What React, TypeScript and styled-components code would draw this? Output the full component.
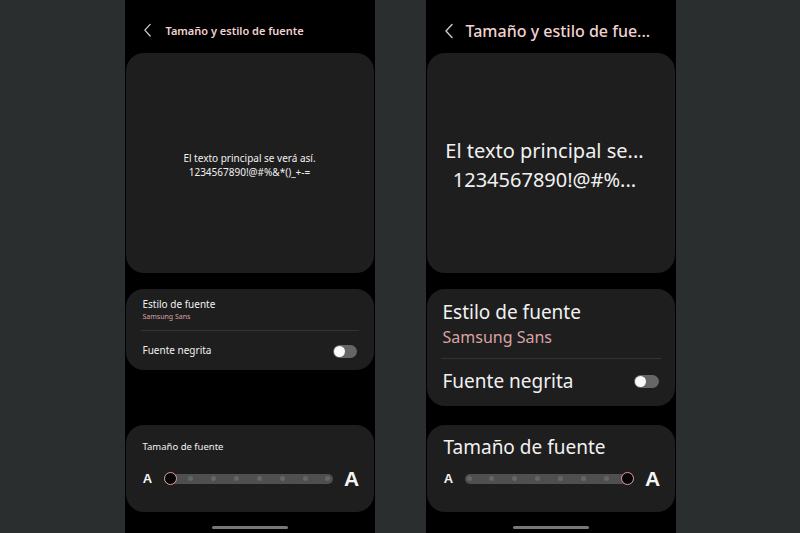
import React, { FC } from "react";
import styled, { createGlobalStyle } from "styled-components";

type Size = "small" | "large";

interface PhoneProps {
    size: Size;
    title: string;
    previewLines: string[];
    sliderValue: number;
}

const S = {
    small: {
        titleSize: 11, titleLeft: 14, chevron: 9,
        previewSize: 10, previewLine: 14,
        labelSize: 10, subSize: 7, card2Pad: "9px 17px 9px 17px",
        dividerGap: "9px -2px 13px", toggleW: 24, toggleH: 13,
        sizeTitle: 9.5, sizeTitleTop: 16, smallA: 13, bigA: 21,
    },
    large: {
        titleSize: 16, titleLeft: 12, chevron: 10,
        previewSize: 20, previewLine: 29,
        labelSize: 19, subSize: 16, card2Pad: "11px 16px 9px 16px",
        dividerGap: "10px -2px", toggleW: 25, toggleH: 13,
        sizeTitle: 19, sizeTitleTop: 10, smallA: 13, bigA: 21,
    },
};

const Phone: FC<PhoneProps> = ({ size, title, previewLines, sliderValue }) => {
    const steps = 8;
    return (
        <PhoneFrame>
            <Header $size={size}>
                <svg width={S[size].chevron} height={S[size].chevron * 1.6} viewBox="0 0 10 16">
                    <path d="M8 1.5 L2 8 L8 14.5" fill="none" stroke="#d8c6c6" strokeWidth="1.4" strokeLinecap="round" strokeLinejoin="round" />
                </svg>
                <HeaderTitle $size={size}>{title}</HeaderTitle>
            </Header>

            <PreviewCard $size={size}>
                {previewLines.map((l) => (
                    <PreviewText key={l} $size={size}>{l}</PreviewText>
                ))}
            </PreviewCard>

            <SettingsCard $size={size}>
                <Row>
                    <Label $size={size}>Estilo de fuente</Label>
                    <SubLabel $size={size}>Samsung Sans</SubLabel>
                </Row>
                <Divider $size={size} />
                <ToggleRow $size={size}>
                    <Label $size={size}>Fuente negrita</Label>
                    <Toggle $size={size}><Knob /></Toggle>
                </ToggleRow>
            </SettingsCard>

            <SizeCard>
                <SizeTitle $size={size}>Tamaño de fuente</SizeTitle>
                <SliderRow>
                    <LetterA $px={S[size].smallA}>A</LetterA>
                    <Track>
                        {Array.from({ length: steps }).map((_, i) => (
                            <Dot key={i} $hidden={i === sliderValue} />
                        ))}
                        <Thumb style={{ left: `calc(${(sliderValue / (steps - 1)) * 100}% - ${sliderValue === 0 ? 0 : 13}px)` }} />
                    </Track>
                    <LetterA $px={S[size].bigA}>A</LetterA>
                </SliderRow>
            </SizeCard>

            <HomeBar />
        </PhoneFrame>
    );
};

const App: FC = () => (
    <>
        <GlobalStyle />
        <Page>
            <Phone
                size="small"
                title="Tamaño y estilo de fuente"
                previewLines={["El texto principal se verá así.", "1234567890!@#%&*()_+-="]}
                sliderValue={0}
            />
            <Phone
                size="large"
                title="Tamaño y estilo de fue..."
                previewLines={["El texto principal se...", "1234567890!@#%..."]}
                sliderValue={7}
            />
        </Page>
    </>
);

export default App;

const GlobalStyle = createGlobalStyle`
    html, body {
        margin: 0;
        padding: 0;
        background: #2a2e2f;
        font-family: "Noto Sans", "Open Sans", sans-serif;
    }
`;

const Page = styled.div`
    width: 800px;
    height: 533px;
    display: flex;
    justify-content: center;
    gap: 51px;
    background: #2a2e2f;
    overflow: hidden;
`;

const PhoneFrame = styled.div`
    width: 250px;
    height: 533px;
    background: #000;
    display: flex;
    flex-direction: column;
    padding: 0 1px;
    box-sizing: border-box;
    color: #f1f1f1;
`;

const Header = styled.div<{ $size: Size }>`
    height: 53px;
    display: flex;
    align-items: center;
    padding-left: 17px;
    padding-top: ${(p) => (p.$size === "small" ? 7 : 9)}px;
    box-sizing: border-box;
`;

const HeaderTitle = styled.span<{ $size: Size }>`
    margin-left: ${(p) => S[p.$size].titleLeft}px;
    font-size: ${(p) => S[p.$size].titleSize}px;
    font-weight: ${(p) => (p.$size === "small" ? 600 : 500)};
    color: #f2d2d2;
    white-space: nowrap;
`;

const Card = styled.div`
    background: #1e1e1e;
    border-radius: 18px;
`;

const PreviewCard = styled(Card)<{ $size: Size }>`
    height: 220px;
    display: flex;
    flex-direction: column;
    align-items: center;
    justify-content: center;
    padding-top: 4px;
    padding-right: ${(p) => (p.$size === "large" ? 12 : 0)}px;
    box-sizing: border-box;
`;

const PreviewText = styled.div<{ $size: Size }>`
    font-size: ${(p) => S[p.$size].previewSize}px;
    line-height: ${(p) => S[p.$size].previewLine}px;
    white-space: nowrap;
`;

const SettingsCard = styled(Card)<{ $size: Size }>`
    margin-top: 16px;
    padding: ${(p) => S[p.$size].card2Pad};
    display: flex;
    flex-direction: column;
`;

const Row = styled.div`
    display: flex;
    flex-direction: column;
`;

const Label = styled.div<{ $size: Size }>`
    font-size: ${(p) => S[p.$size].labelSize}px;
    line-height: ${(p) => S[p.$size].labelSize * 1.35}px;
`;

const SubLabel = styled.div<{ $size: Size }>`
    font-size: ${(p) => S[p.$size].subSize}px;
    line-height: ${(p) => S[p.$size].subSize * 1.4}px;
    color: #d9a3a5;
`;

const Divider = styled.div<{ $size: Size }>`
    height: 1px;
    background: #333;
    margin: ${(p) => S[p.$size].dividerGap};
`;

const ToggleRow = styled.div<{ $size: Size }>`
    display: flex;
    align-items: center;
    justify-content: space-between;
    padding-bottom: ${(p) => (p.$size === "small" ? 3 : 2)}px;
`;

const Toggle = styled.div<{ $size: Size }>`
    width: ${(p) => S[p.$size].toggleW}px;
    height: ${(p) => S[p.$size].toggleH}px;
    border-radius: 7px;
    background: #666;
    display: flex;
    align-items: center;
    padding: 0 1px;
    box-sizing: border-box;
`;

const Knob = styled.div`
    width: 11px;
    height: 11px;
    border-radius: 50%;
    background: #fafafa;
`;

const SizeCard = styled(Card)`
    margin-top: auto;
    height: 87px;
    padding: 0 14px 0 17px;
    display: flex;
    flex-direction: column;
    box-sizing: border-box;
`;

const SizeTitle = styled.div<{ $size: Size }>`
    font-size: ${(p) => S[p.$size].sizeTitle}px;
    line-height: ${(p) => S[p.$size].sizeTitle * 1.3}px;
    padding-top: ${(p) => S[p.$size].sizeTitleTop}px;
`;

const SliderRow = styled.div`
    display: flex;
    align-items: center;
    margin-top: auto;
    margin-bottom: 23px;
    gap: 11px;
`;

const LetterA = styled.span<{ $px: number }>`
    font-family: "Liberation Sans", sans-serif;
    font-size: ${(p) => p.$px}px;
    font-weight: 700;
    line-height: 1;
    color: #f4f4f4;
    width: ${(p) => (p.$px > 15 ? 16 : 10)}px;
    text-align: center;
`;

const Track = styled.div`
    position: relative;
    flex: 1;
    height: 10px;
    border-radius: 5px;
    background: #4f4f4f;
    display: flex;
    align-items: center;
    justify-content: space-between;
    padding: 0 2px;
    box-sizing: border-box;
`;

const Dot = styled.span<{ $hidden: boolean }>`
    width: 5px;
    height: 5px;
    border-radius: 50%;
    background: ${(p) => (p.$hidden ? "transparent" : "#666")};
`;

const Thumb = styled.span`
    position: absolute;
    top: -2px;
    width: 11px;
    height: 11px;
    border-radius: 50%;
    background: #050505;
    border: 1.5px solid #e49a9c;
`;

const HomeBar = styled.div`
    width: 76px;
    height: 3px;
    border-radius: 2px;
    background: #777;
    margin: 14px auto 4px;
`;
